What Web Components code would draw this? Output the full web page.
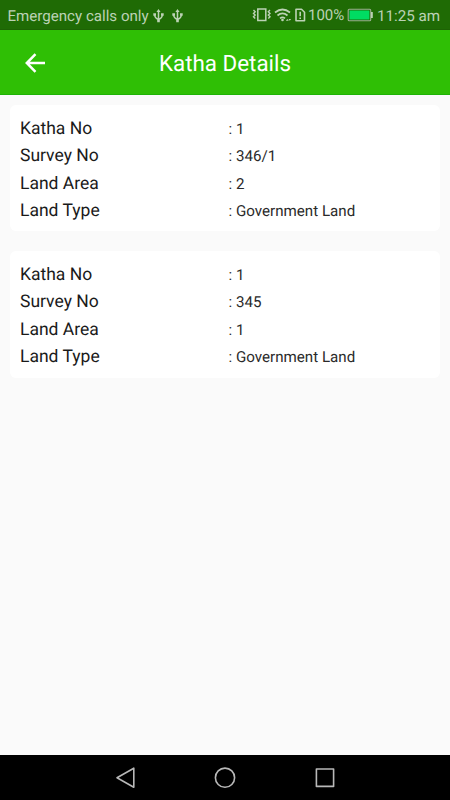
<!DOCTYPE html>
<html lang="en"><head><meta charset="utf-8"><title>Katha Details</title>
<style>html,body{margin:0;height:100%;overflow:hidden}body{font-family:Roboto,"Liberation Sans",sans-serif;text-rendering:geometricPrecision}</style></head>
<body><katha-app></katha-app>
<script>
const define=(name,html)=>customElements.define(name,class extends HTMLElement{
 constructor(){super();this.attachShadow({mode:'open'}).innerHTML=html;}
});
define('status-bar',`<style>
:host{display:flex;box-sizing:border-box;height:30px;background:#1f6b05;color:#bcd2b5;padding:1px 10px 0 7.5px;align-items:center;font-size:15.1px;line-height:30px;white-space:nowrap;border-bottom:1px solid #1d6204}
svg{display:block;flex:none}.carrier{width:144px;padding-top:1px}.usb{margin-right:6px}.space{flex:1}.pct{margin-left:2px;width:39px;font-size:15px}.time{width:63px;margin-left:4px;padding-top:1px;font-size:15.2px}
</style><span class="carrier">Emergency calls only</span>
<svg class="usb" width="13" height="15" viewBox="0 0 13 15" fill="none" stroke="#bcd2b5" stroke-width="1.5"><path d="M6.5 13V3M6.500 11.500C3.500 10.500 2.700 9.500 2.700 6.500M6.500 11.500C9.500 10.500 10.300 9.500 10.300 6.500"/><path d="M6.500 1l2.100 3H4.400zM1.300 5.300h2.700v2.500H1.300zM9 5.300h2.700v2.500H9zM5.200 11.500h2.600v2.800H5.200z" fill="#bcd2b5" stroke="none"/></svg>
<svg width="13" height="15" viewBox="0 0 13 15" fill="none" stroke="#bcd2b5" stroke-width="1.5"><path d="M6.5 13V3M6.500 11.500C3.500 10.500 2.700 9.500 2.700 6.500M6.500 11.500C9.500 10.500 10.300 9.500 10.300 6.500"/><path d="M6.500 1l2.100 3H4.400zM1.300 5.300h2.700v2.500H1.300zM9 5.300h2.700v2.500H9zM5.200 11.500h2.600v2.800H5.200z" fill="#bcd2b5" stroke="none"/></svg>
<span class="space"></span>
<svg width="54" height="16" viewBox="252 7 54 16" fill="none" stroke="#bcd2b5" stroke-width="1.500"><rect x="257.800" y="9" width="8" height="11.500"/><path d="M253.500 10l1.700 1.700-1.700 1.700 1.700 1.700-1.700 1.700 1.700 1.700M270 10l-1.700 1.700 1.700 1.700-1.700 1.700 1.700 1.700-1.700 1.700" stroke-width="1.400"/>
<path d="M275 12.500q7.500-6 15 0M277.500 15.500q5-4.200 10 0M280 18.300q2.500-2 5 0" stroke-width="1.700"/><circle cx="282.500" cy="20" r="1.300" fill="#bcd2b5" stroke="none"/><path d="M285.800 20.700l1.500-1.700 1.500 1.700zM288.500 19h2.600l-1.300 1.700z" fill="#bcd2b5" stroke="none"/>
<path d="M296 9.300h5.500l3 3v8.500H296z" stroke-width="1.600" stroke-linejoin="round"/><path d="M300.200 11.800v4.400M300.200 17.500v1.600" stroke-width="1.600"/></svg>
<span class="pct">100%</span>
<svg width="26" height="14" viewBox="0 0 26 14"><rect x="1.2" y="1.200" width="22.5" height="11.600" rx="1" fill="none" stroke="#9baf91" stroke-width="1.100"/><rect x="2.500" y="2.500" width="19.900" height="9" fill="#00dc62"/><path d="M24 4h1.800v6H24z" fill="#bcd2b5"/></svg>
<span class="time">11:25 am</span>`);
define('app-bar',`<style>:host{display:grid;grid-template-columns:70px 1fr 70px;align-items:center;height:65px;box-sizing:border-box;background:#2fbf05;color:#fff;border-bottom:1px solid #1eb306}
svg{display:block;margin-left:25px;margin-top:1px}.title{text-align:center;font-size:22.4px;line-height:28px;padding-top:3px;white-space:nowrap}</style>
<svg width="20" height="20" viewBox="0 0 20 20" fill="none" stroke="#fff" stroke-width="2.500"><path d="M20 10H2M10.500 1.200L1.800 10l8.700 8.800"/></svg><span class="title"><slot></slot></span>`);
define('detail-card',`<style>:host{display:flex;flex-direction:column;box-sizing:border-box;height:126.300px;padding:9px 10.500px;background:#fff;border-radius:6px;color:#1a1a1a}</style><slot></slot>`);
define('detail-row',`<style>:host{display:grid;flex:none;grid-template-columns:208.500px 1fr;height:27.500px;line-height:27.500px;white-space:nowrap}.label{font-size:17.500px;padding-top:1.500px}.value{font-size:15.15px;padding-top:1.600px;color:#2a2a2a}</style><span class="label"><slot name="label"></slot></span><span class="value">: <slot></slot></span>`);
define('nav-bar',`<style>:host{display:flex;height:45px;background:#000;justify-content:center;gap:76px;align-items:center}svg{display:block}</style>
<svg width="24" height="24" viewBox="0 0 24 24" fill="none" stroke="#b8b8b8" stroke-width="1.600" stroke-linejoin="round"><path d="M20.800 2.200v19L4 11.700z"/></svg>
<svg width="24" height="24" viewBox="0 0 24 24" fill="none" stroke="#b8b8b8" stroke-width="1.600"><circle cx="12" cy="11.700" r="9.600"/></svg>
<svg width="24" height="24" viewBox="0 0 24 24" fill="none" stroke="#b8b8b8" stroke-width="1.600" stroke-linejoin="round"><rect x="3.400" y="3" width="17.200" height="17.400"/></svg>`);
const card=(survey,area)=>`<detail-card>${[['Katha No','1'],['Survey No',survey],['Land Area',area],['Land Type','Government Land']].map(([l,v])=>`<detail-row><span slot="label">${l}</span>${v}</detail-row>`).join('')}</detail-card>`;
define('katha-app',`<style>:host{display:flex;flex-direction:column;width:450px;height:800px;background:#fafafa}main{flex:1;display:flex;flex-direction:column;gap:20px;padding:10px 10px 10px 9.500px}</style>
<status-bar></status-bar><app-bar>Katha Details</app-bar><main>${card('346/1','2')}${card('345','1')}</main><nav-bar></nav-bar>`);
</script></body></html>
